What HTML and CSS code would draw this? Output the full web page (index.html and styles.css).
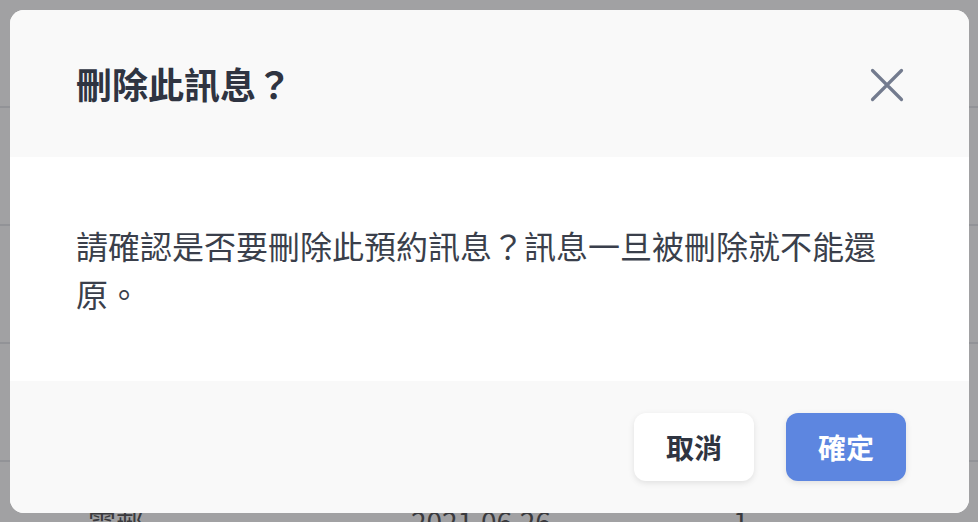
FILE: index.html
```html
<!DOCTYPE html>
<html lang="zh-Hant">
<head>
  <meta charset="UTF-8">
  <meta name="viewport" content="width=device-width, initial-scale=1.0">
  <title>刪除此訊息？</title>
  <link rel="stylesheet" href="styles.css">
</head>
<body>
  <div class="page">
    <div class="row row-first"></div>
    <div class="row"></div>
    <div class="row"></div>
    <div class="row"></div>
    <div class="row row-data">
      <span class="cell cell-name">電郵</span>
      <span class="cell cell-date">2021.06.26</span>
      <span class="cell cell-count">1</span>
    </div>
  </div>

  <div class="overlay">
    <div class="modal">
      <div class="modal-header">
        <h2 class="modal-title">刪除此訊息？</h2>
        <button type="button" class="close-btn" aria-label="關閉">
          <svg width="34" height="34" viewBox="0 0 34 34">
            <path d="M2.5 2.5 L31.5 31.5 M31.5 2.5 L2.5 31.5" stroke="#737b8e" stroke-width="3.2" stroke-linecap="round" fill="none"/>
          </svg>
        </button>
      </div>
      <div class="modal-body">
        <p>請確認是否要刪除此預約訊息？訊息一旦被刪除就不能還原。</p>
      </div>
      <div class="modal-footer">
        <button type="button" class="btn btn-cancel">取消</button>
        <button type="button" class="btn btn-confirm">確定</button>
      </div>
    </div>
  </div>
</body>
</html>
```

FILE: styles.css
```css
body {
  margin: 0;
  font-family: "Noto Sans CJK TC", "Noto Sans", sans-serif;
  background: #a1a1a3;
  overflow: hidden;
  height: 522px;
}

/* page behind the dialog, already dimmed */
.page {
  width: 100%;
}

.row {
  height: 116px;
  border-bottom: 2px solid #929397;
}

.row-first {
  height: 106px;
}

.row-data {
  display: flex;
  align-items: center;
  border-bottom: none;
  font-size: 28px;
  color: #3a3a3d;
}

.cell {
  position: relative;
  top: 1px;
}

.cell-name {
  margin-left: 88px;
  width: 323px;
}

.cell-date {
  width: 322px;
}

.overlay {
  position: fixed;
  inset: 0;
}

.modal {
  position: absolute;
  left: 10px;
  top: 10px;
  width: 959px;
  border-radius: 14px;
  overflow: hidden;
  background: #fff;
}

.modal-header {
  height: 147px;
  display: flex;
  align-items: center;
  justify-content: space-between;
  padding: 0 65px 0 66px;
  background: #f9f9f9;
}

.modal-title {
  margin: 0;
  font-size: 36px;
  font-weight: 700;
  color: #2f3441;
  line-height: 1;
  position: relative;
  top: -1px;
}

.close-btn {
  background: none;
  border: none;
  padding: 0;
  width: 34px;
  height: 34px;
  cursor: pointer;
  position: relative;
  top: 1px;
}

.close-btn svg {
  display: block;
}

.modal-body {
  padding: 64px 66px;
  background: #fff;
}

.modal-body p {
  margin: 0;
  font-size: 32px;
  line-height: 48px;
  color: #3a3f4b;
}

.modal-footer {
  display: flex;
  justify-content: flex-end;
  gap: 32px;
  padding: 32px 63px 32px 66px;
  background: #f9f9f9;
}

.btn {
  width: 120px;
  height: 68px;
  border: none;
  border-radius: 12px;
  font-family: inherit;
  font-size: 28px;
  font-weight: 700;
  cursor: pointer;
  box-shadow: 0 2px 6px rgba(0, 0, 0, 0.1);
}

.btn-cancel {
  background: #fff;
  color: #2f3441;
}

.btn-confirm {
  background: #5d86e0;
  color: #fff;
}
```
